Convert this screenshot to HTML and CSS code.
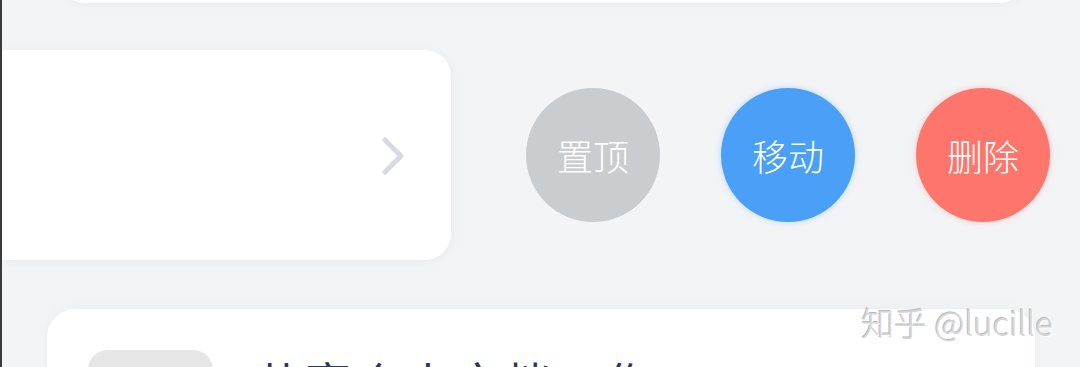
FILE: index.html
```html
<!DOCTYPE html>
<html lang="zh">
<head>
<meta charset="utf-8">
<link rel="stylesheet" href="styles.css">
</head>
<body>
<div class="page">
  <div class="card-top"></div>
  <div class="swipe-row">
    <div class="card-mid">
      <svg class="chevron" width="30" height="42" viewBox="0 0 30 42">
        <polyline points="6,5 22,21 6,37" fill="none" stroke="#d9dadf" stroke-width="5" stroke-linecap="round" stroke-linejoin="round"/>
      </svg>
    </div>
    <div class="actions">
      <div class="act act-gray">置顶</div>
      <div class="act act-blue">移动</div>
      <div class="act act-red">删除</div>
    </div>
  </div>
  <div class="card-bottom">
    <div class="thumb"></div>
    <div class="title">共享个人文档工作</div>
  </div>
  <div class="watermark">知乎 @lucille</div>
</div>
</body>
</html>
```

FILE: styles.css
```css
html, body {
  margin: 0;
  padding: 0;
}
body {
  width: 1080px;
  height: 367px;
  overflow: hidden;
  background: #f3f4f6;
  font-family: "Noto Sans CJK SC", "Noto Sans", sans-serif;
}
.page {
  position: relative;
  width: 1080px;
  height: 367px;
  overflow: hidden;
  border-left: 2px solid #3a3a3a;
  box-sizing: border-box;
}
.card-top {
  height: 63px;
  margin: -60px 58px 0 60px;
  background: #fff;
  border-radius: 0 0 22px 22px;
  box-shadow: 0 2px 10px rgba(0, 0, 0, 0.04);
}
.swipe-row {
  display: flex;
  align-items: center;
  margin-top: 47px;
  height: 210px;
}
.card-mid {
  width: 449px;
  height: 210px;
  background: #fff;
  border-radius: 0 26px 26px 0;
  box-shadow: 2px 2px 10px rgba(0, 0, 0, 0.04);
  display: flex;
  align-items: center;
  justify-content: flex-end;
  box-sizing: border-box;
  padding-right: 42px;
}
.chevron {
  display: block;
  margin-top: 1px;
}
.actions {
  display: flex;
  gap: 61px;
  margin-left: 75px;
}
.act {
  width: 134px;
  height: 134px;
  border-radius: 50%;
  color: #fff;
  font-size: 36px;
  font-weight: 300;
  display: flex;
  align-items: center;
  justify-content: center;
  letter-spacing: 0;
}
.act-gray {
  background: #c9cdd0;
}
.act-blue {
  background: #4aa0f6;
  box-shadow: 0 0 6px rgba(74, 160, 246, 0.35);
}
.act-red {
  background: #fe766b;
  box-shadow: 0 0 6px rgba(254, 118, 107, 0.35);
}
.card-bottom {
  margin: 49px 45px 0 45px;
  height: 120px;
  background: #fff;
  border-radius: 28px 28px 0 0;
  box-shadow: 0 -2px 10px rgba(0, 0, 0, 0.03);
  display: flex;
  align-items: flex-start;
  padding: 41px 0 0 41px;
  box-sizing: border-box;
}
.thumb {
  width: 125px;
  height: 80px;
  background: #e6e6e6;
  border-radius: 20px;
  flex: none;
}
.title {
  margin-left: 42px;
  margin-top: 8px;
  font-size: 46px;
  line-height: 46px;
  color: #2b3a5c;
  letter-spacing: 4px;
  white-space: nowrap;
}
.watermark {
  position: absolute;
  right: 27px;
  top: 298px;
  font-family: "Noto Sans CJK SC", "Noto Sans", sans-serif;
  font-size: 33px;
  font-weight: 300;
  color: #d6d6d8;
  text-shadow: 1px 1px 0 #ffffff, -1px -1px 0 #bdbdc0;
}
```
